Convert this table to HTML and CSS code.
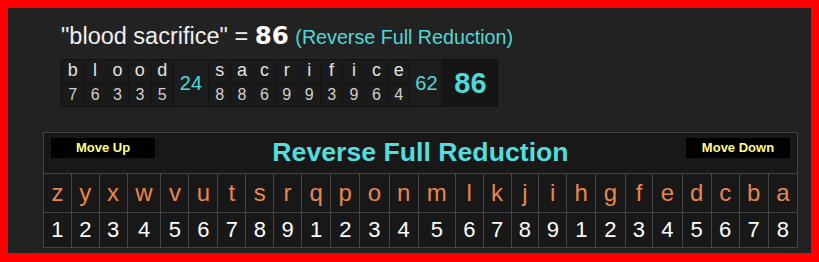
FILE: index.html
```html
<!DOCTYPE html>
<html>
<head>
<meta charset="utf-8">
<link rel="stylesheet" href="styles.css">
</head>
<body>
<div class="page">
  <div class="phrase"><span class="quote">"blood sacrifice" = </span><span class="total">86</span> <span class="cipher">(Reverse Full Reduction)</span></div>
  <div class="bd">
    <div class="col"><span class="l">b</span><span class="n">7</span></div>
    <div class="col"><span class="l">l</span><span class="n">6</span></div>
    <div class="col"><span class="l">o</span><span class="n">3</span></div>
    <div class="col"><span class="l">o</span><span class="n">3</span></div>
    <div class="col"><span class="l">d</span><span class="n">5</span></div>
    <div class="sum s1">24</div>
    <div class="col"><span class="l">s</span><span class="n">8</span></div>
    <div class="col"><span class="l">a</span><span class="n">8</span></div>
    <div class="col"><span class="l">c</span><span class="n">6</span></div>
    <div class="col"><span class="l">r</span><span class="n">9</span></div>
    <div class="col"><span class="l">i</span><span class="n">9</span></div>
    <div class="col"><span class="l">f</span><span class="n">3</span></div>
    <div class="col"><span class="l">i</span><span class="n">9</span></div>
    <div class="col"><span class="l">c</span><span class="n">6</span></div>
    <div class="col"><span class="l">e</span><span class="n">4</span></div>
    <div class="sum s2">62</div>
    <div class="grand">86</div>
  </div>
  <table class="ct">
    <tr>
      <th colspan="26">
        <div class="hdr">
          <button class="btn">Move Up</button>
          <span class="title">Reverse Full Reduction</span>
          <button class="btn">Move Down</button>
        </div>
      </th>
    </tr>
    <tr class="letters">
      <td>z</td><td>y</td><td>x</td><td>w</td><td>v</td><td>u</td><td>t</td><td>s</td><td>r</td><td>q</td><td>p</td><td>o</td><td>n</td><td>m</td><td>l</td><td>k</td><td>j</td><td>i</td><td>h</td><td>g</td><td>f</td><td>e</td><td>d</td><td>c</td><td>b</td><td>a</td>
    </tr>
    <tr class="nums">
      <td>1</td><td>2</td><td>3</td><td>4</td><td>5</td><td>6</td><td>7</td><td>8</td><td>9</td><td>1</td><td>2</td><td>3</td><td>4</td><td>5</td><td>6</td><td>7</td><td>8</td><td>9</td><td>1</td><td>2</td><td>3</td><td>4</td><td>5</td><td>6</td><td>7</td><td>8</td>
    </tr>
  </table>
</div>
</body>
</html>
```

FILE: styles.css
```css
html, body {
  margin: 0;
  padding: 0;
}
body {
  background: #ff0000;
  font-family: "Liberation Sans", Arial, sans-serif;
}
.page {
  margin: 8px;
  width: 803px;
  height: 245px;
  box-sizing: border-box;
  padding-top: 14px;
  background: #222222;
  overflow: hidden;
}
.phrase {
  margin-left: 53px;
  font-size: 23.5px;
  line-height: 28px;
  color: #eeeeee;
  white-space: nowrap;
}
.total {
  font-family: "DejaVu Sans", Verdana, sans-serif;
  font-weight: bold;
  font-size: 24.5px;
  color: #ffffff;
}
.cipher {
  font-size: 19.7px;
  color: #4fd8d8;
}
.bd {
  display: flex;
  gap: 1px;
  width: max-content;
  margin: 8px 0 0 53px;
  border: 1px solid #131313;
  background: #131313;
}
.col {
  display: flex;
  flex-direction: column;
  gap: 1px;
  width: 21.4px;
}
.col .l {
  display: block;
  height: 23px;
  line-height: 20px;
  font-size: 18px;
  text-align: center;
  color: #e2e2e2;
  background: #1b1b1b;
}
.col .n {
  display: block;
  height: 22px;
  line-height: 22px;
  font-size: 16px;
  text-align: center;
  color: #cfcfcf;
  background: #1b1b1b;
}
.sum {
  height: 46px;
  line-height: 46px;
  font-size: 20px;
  text-align: center;
  color: #4fd8d8;
  background: #1d1d1d;
}
.s1 {
  width: 34px;
}
.s2 {
  width: 32px;
}
.grand {
  width: 54px;
  height: 46px;
  line-height: 46px;
  font-size: 29px;
  font-weight: bold;
  text-align: center;
  color: #4fd8d8;
  background: #151515;
}
.ct {
  margin: 25px 0 0 35px;
  width: 755px;
  border-collapse: collapse;
  background: #181818;
}
.ct th,
.ct td {
  border: 1px solid #444444;
  padding: 0 5px;
  text-align: center;
}
.ct th {
  padding: 0;
}
.hdr {
  display: flex;
  justify-content: space-between;
  align-items: flex-start;
  height: 40px;
  box-sizing: border-box;
  padding: 5px 7px 0 7px;
}
.btn {
  width: 104px;
  height: 20px;
  padding: 0;
  border: 0;
  background: #000000;
  color: #ffff88;
  font-family: "Liberation Sans", Arial, sans-serif;
  font-weight: bold;
  font-size: 13px;
  line-height: 20px;
}
.title {
  margin-top: -1.5px;
  font-size: 26.67px;
  font-weight: bold;
  line-height: 30px;
  color: #55dddd;
}
.letters td {
  height: 38px;
  line-height: 38px;
  font-size: 24px;
  color: #e8864f;
}
.nums td {
  height: 34px;
  line-height: 34px;
  font-size: 22px;
  color: #ffffff;
}
```
